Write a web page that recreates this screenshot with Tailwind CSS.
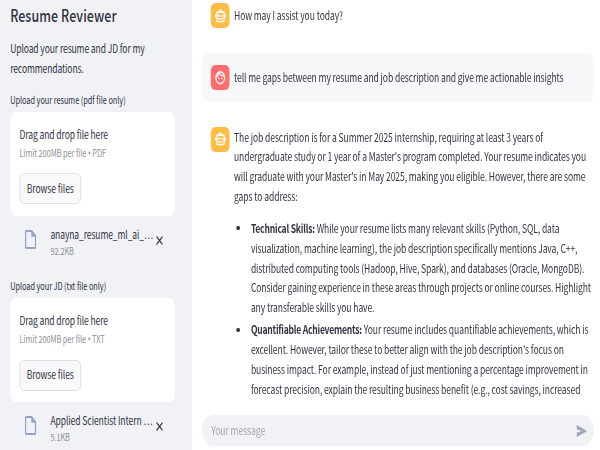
<!DOCTYPE html>
<html lang="en">
<head>
<meta charset="utf-8">
<title>Resume Reviewer</title>
<script src="https://cdn.jsdelivr.net/npm/@tailwindcss/browser@4"></script>
</head>
<body class="bg-white">
<svg class="hidden">
  <symbol id="bot" viewBox="0 0 24 24"><path fill="#fff" fill-rule="evenodd" d="M20.500 9V7.500C20.500 6 19.500 5 18 5h-3.300C14.700 3.300 13.600 2 12 2S9.300 3.300 9.300 5H6C4.500 5 3.500 6 3.500 7.500V9C2 9 1 10.300 1 12s1 3 2.500 3v4c0 1.500 1 2.500 2.500 2.500h12c1.500 0 2.500-1 2.500-2.500v-4C22 15 23 13.700 23 12s-1-3-2.500-3zM18 19H6V7.500h12V19zM9 9.700a1.900 1.900 0 1 0 0 3.800 1.900 1.900 0 0 0 0-3.800zm6 0a1.900 1.900 0 1 0 0 3.800 1.900 1.900 0 0 0 0-3.800zM8 15h8v2.200H8z"/></symbol>
  <symbol id="face" viewBox="0 0 24 24"><path fill="#fff" stroke="#fff" stroke-width=".4" d="M10.250 13a1.250 1.250 0 1 1-2.500 0 1.250 1.250 0 0 1 2.500 0zM15 11.750a1.250 1.250 0 1 0 0 2.500 1.250 1.250 0 0 0 0-2.500zM22 12c0 5.520-4.480 10-10 10S2 17.520 2 12 6.480 2 12 2s10 4.480 10 10zM10.660 4.120C12.060 6.440 14.600 8 17.500 8c.460 0 .910-.050 1.340-.120C17.440 5.560 14.900 4 12 4c-.460 0-.910.050-1.340.120zM4.420 9.470a8.050 8.050 0 0 0 3.660-4.440 8.050 8.050 0 0 0-3.660 4.440zM20 12c0-.780-.120-1.530-.330-2.240-.700.150-1.420.240-2.170.240a10 10 0 0 1-7.760-3.690A10 10 0 0 1 4 11.860c.010.040 0 .090 0 .140 0 4.410 3.590 8 8 8s8-3.590 8-8z"/></symbol>
  <symbol id="file" viewBox="0 0 16 20"><path fill="none" stroke="#96a3c7" stroke-width="2" stroke-linejoin="round" d="M2.500 1H9.500L15 6.500V17.500Q15 19 13.500 19H2.500Q1 19 1 17.500V2.500Q1 1 2.500 1Z"/><path fill="#96a3c7" d="M9 1L15 7H9Z"/></symbol>
</svg>
<div class="h-[450px] w-[600px] overflow-hidden">
<div class="flex w-[800px] h-[450px] origin-top-left scale-x-75 text-[11.400px] leading-[19.800px] text-[#31333f] whitespace-nowrap" style="font-family:'Noto Sans CJK SC','Source Sans Pro',sans-serif">
  <aside class="w-[256px] h-[450px] shrink-0 bg-[#f0f2f6] px-[13.500px] pt-[2px] overflow-hidden">
    <h1 class="text-[16.600px] leading-[26px] font-medium"><span data-w="106.500">Resume Reviewer</span></h1>
    <p class="mt-[11px]"><span data-w="134.500">Upload your resume and JD for my</span><br><span data-w="73.500">recommendations.</span></p>
    <p class="mt-[13px] text-[9.900px] leading-[17px]"><span data-w="115.500">Upload your resume (pdf file only)</span></p>
    <div class="mt-[3px] h-[104px] w-[219.500px] rounded-[8px] bg-white px-[12.500px] pt-[13px]">
      <p><span data-w="88.500">Drag and drop file here</span></p>
      <p class="mt-[0.500px] text-[9.900px] leading-[17px] text-[#8f9097]"><span data-w="86.500">Limit 200MB per file <span class="font-['Open_Sans']">•</span> PDF</span></p>
      <div class="mt-[11.500px] flex h-[31px] w-[82px] items-center justify-center rounded-[6px] border border-[#d9dadf] bg-[#f9f9fb]"><span data-w="47">Browse files</span></div>
    </div>
    <div class="mt-[8.500px] flex h-[36px] pl-[19.500px]">
      <svg class="mt-[6px] h-[19px] w-[15.500px]" viewBox="0 0 16 20" preserveAspectRatio="none"><use href="#file"/></svg>
      <div class="ml-[18.700px] w-[140.500px]">
        <p class="mt-[0.500px] leading-[19px]"><span data-w="102.500">anayna_resume_ml_ai_…</span></p>
        <p class="text-[9.900px] leading-[14px] text-[#8f9097]"><span data-w="23.500">92.2KB</span></p>
      </div>
      <svg class="mt-[11.500px] h-[9px] w-[9.500px]" viewBox="0 0 9 9" preserveAspectRatio="none"><path d="M.7 .5L8.300 8.500M8.300 .5L.7 8.500" stroke="#31333f" stroke-width="1.300"/></svg>
    </div>
    <p class="mt-[17.800px] text-[9.900px] leading-[17px]"><span data-w="96">Upload your JD (txt file only)</span></p>
    <div class="mt-[3px] h-[104px] w-[219.500px] rounded-[8px] bg-white px-[12.500px] pt-[13px]">
      <p><span data-w="88.500">Drag and drop file here</span></p>
      <p class="mt-[0.500px] text-[9.900px] leading-[17px] text-[#8f9097]"><span data-w="85">Limit 200MB per file <span class="font-['Open_Sans']">•</span> TXT</span></p>
      <div class="mt-[11.500px] flex h-[31px] w-[82px] items-center justify-center rounded-[6px] border border-[#d9dadf] bg-[#f9f9fb]"><span data-w="47">Browse files</span></div>
    </div>
    <div class="mt-[8.500px] flex h-[36px] pl-[19.500px]">
      <svg class="mt-[6px] h-[19px] w-[15.500px]" viewBox="0 0 16 20" preserveAspectRatio="none"><use href="#file"/></svg>
      <div class="ml-[18.700px] w-[140.500px]">
        <p class="mt-[0.500px] leading-[19px]"><span data-w="102">Applied Scientist Intern …</span></p>
        <p class="text-[9.900px] leading-[14px] text-[#8f9097]"><span data-w="19.500">5.1KB</span></p>
      </div>
      <svg class="mt-[11.500px] h-[9px] w-[9.500px]" viewBox="0 0 9 9" preserveAspectRatio="none"><path d="M.7 .5L8.300 8.500M8.300 .5L.7 8.500" stroke="#31333f" stroke-width="1.300"/></svg>
    </div>
  </aside>
  <main class="flex h-[450px] w-[544px] flex-col pl-[12.500px] pr-[8px]">
    <div class="flex pl-[12.500px] pt-[3px]">
      <div class="flex h-[25px] w-[25px] items-center justify-center rounded-[6px] bg-[#ffbd45]"><svg class="h-[16px] w-[16px]"><use href="#bot"/></svg></div>
      <p class="ml-[6px] mt-[3.300px]"><span data-w="109">How may I assist you today?</span></p>
    </div>
    <div class="mt-[24.500px] flex h-[49.500px] items-center rounded-[8px] bg-[#f7f8fa] pl-[12.500px]">
      <div class="flex h-[25px] w-[25px] items-center justify-center rounded-[6px] bg-[#ff6c6c]"><svg class="h-[15.500px] w-[15.500px]" viewBox="0 0 24 24"><use href="#face"/></svg></div>
      <p class="ml-[6px] mt-[1px]"><span data-w="329.500">tell me gaps between my resume and job description and give me actionable insights</span></p>
    </div>
    <div class="mt-[24.500px] flex pl-[12.500px]">
      <div class="flex h-[25px] w-[25px] items-center justify-center rounded-[6px] bg-[#ffbd45]"><svg class="h-[16px] w-[16px]"><use href="#bot"/></svg></div>
      <div class="ml-[6px]">
        <p class="mt-[1px]"><span data-w="309">The job description is for a Summer 2025 internship, requiring at least 3 years of</span><br><span data-w="352">undergraduate study or 1 year of a Master's program completed. Your resume indicates you</span><br><span data-w="351.500">will graduate with your Master's in May 2025, making you eligible. However, there are some</span><br><span data-w="63.500">gaps to address:</span></p>
        <ul class="mt-[12.300px]">
          <li class="flex">
            <i class="ml-[3px] mt-[7.500px] h-[4px] w-[5px] rounded-full bg-[#31333f]"></i>
            <p class="ml-[14.500px]"><b class="font-bold" data-w="64">Technical Skills:</b><span data-w="244.500"> While your resume lists many relevant skills (Python, SQL, data</span><br><span data-w="326.500">visualization, machine learning), the job description specifically mentions Java, C++,</span><br><span data-w="333.500">distributed computing tools (Hadoop, Hive, Spark), and databases (Oracle, MongoDB).</span><br><span data-w="340">Consider gaining experience in these areas through projects or online courses. Highlight</span><br><span data-w="123.500">any transferable skills you have.</span></p>
          </li>
          <li class="mt-[2.500px] flex">
            <i class="ml-[3px] mt-[7.500px] h-[4px] w-[5px] rounded-full bg-[#31333f]"></i>
            <p class="ml-[14.500px]"><b class="font-bold" data-w="111">Quantifiable Achievements:</b><span data-w="226.500"> Your resume includes quantifiable achievements, which is</span><br><span data-w="313">excellent. However, tailor these to better align with the job description's focus on</span><br><span data-w="337">business impact. For example, instead of just mentioning a percentage improvement in</span><br><span data-w="329.500">forecast precision, explain the resulting business benefit (e.g., cost savings, increased</span></p>
          </li>
        </ul>
      </div>
    </div>
    <div class="mt-auto mb-[4px] flex h-[31px] items-center justify-between rounded-[16px] bg-[#f0f2f6] pl-[13px] pr-[9px] text-[#a3a5ad]">
      <span data-w="54">Your message</span>
      <svg class="h-[12px] w-[15px]" viewBox="0 0 15 12" preserveAspectRatio="none"><path fill="#a3a8b8" d="M1 0L15 6L1 12V7.500L8 6L1 4.500Z"/></svg>
    </div>
  </main>
</div>
</div>
<script>
  // Track each line of text so that it spans its measure.
  function fit() {
    document.querySelectorAll('[data-w]').forEach(function (el) {
      el.style.letterSpacing = '0px';
      var gap = el.dataset.w - el.getBoundingClientRect().width;
      el.style.letterSpacing = (gap / 0.75 / el.textContent.length) + 'px';
    });
  }
  window.addEventListener('load', function () {
    fit();
    document.fonts.ready.then(fit);
    requestAnimationFrame(fit);
  });
</script>
</body>
</html>
